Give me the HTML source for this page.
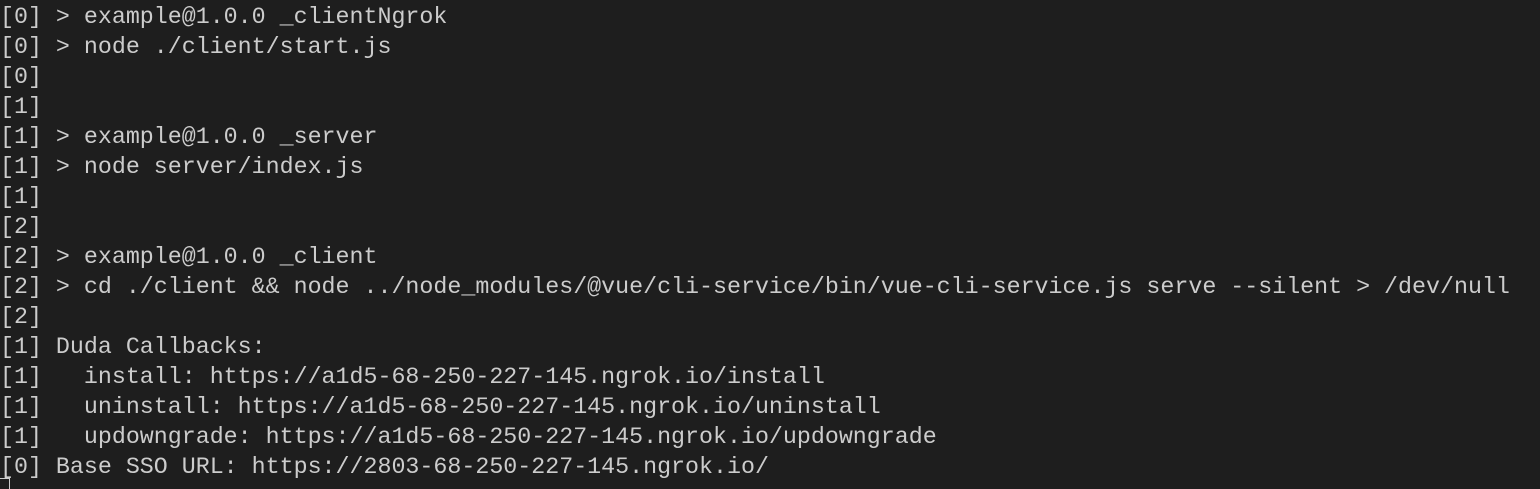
<!DOCTYPE html>
<html><head><style>
html,body{margin:0;padding:0;background:#1e1e1e;width:1540px;height:486px;overflow:hidden}
pre{margin:0;position:absolute;left:0;top:2px;font-family:"Liberation Mono",monospace;font-size:23.3px;line-height:30px;color:#cccccc;white-space:pre}
.cur{position:absolute;left:0;top:478px;width:9px;height:10px;border:1px solid #ccc;border-bottom:none;border-left:none}
</style></head><body>
<pre>[0] &gt; example@1.0.0 _clientNgrok
[0] &gt; node ./client/start.js
[0]
[1]
[1] &gt; example@1.0.0 _server
[1] &gt; node server/index.js
[1]
[2]
[2] &gt; example@1.0.0 _client
[2] &gt; cd ./client &amp;&amp; node ../node_modules/@vue/cli-service/bin/vue-cli-service.js serve --silent &gt; /dev/null
[2]
[1] Duda Callbacks:
[1]   install: https://a1d5-68-250-227-145.ngrok.io/install
[1]   uninstall: https://a1d5-68-250-227-145.ngrok.io/uninstall
[1]   updowngrade: https://a1d5-68-250-227-145.ngrok.io/updowngrade
[0] Base SSO URL: https://2803-68-250-227-145.ngrok.io/</pre>
<div class="cur"></div>
</body></html>
